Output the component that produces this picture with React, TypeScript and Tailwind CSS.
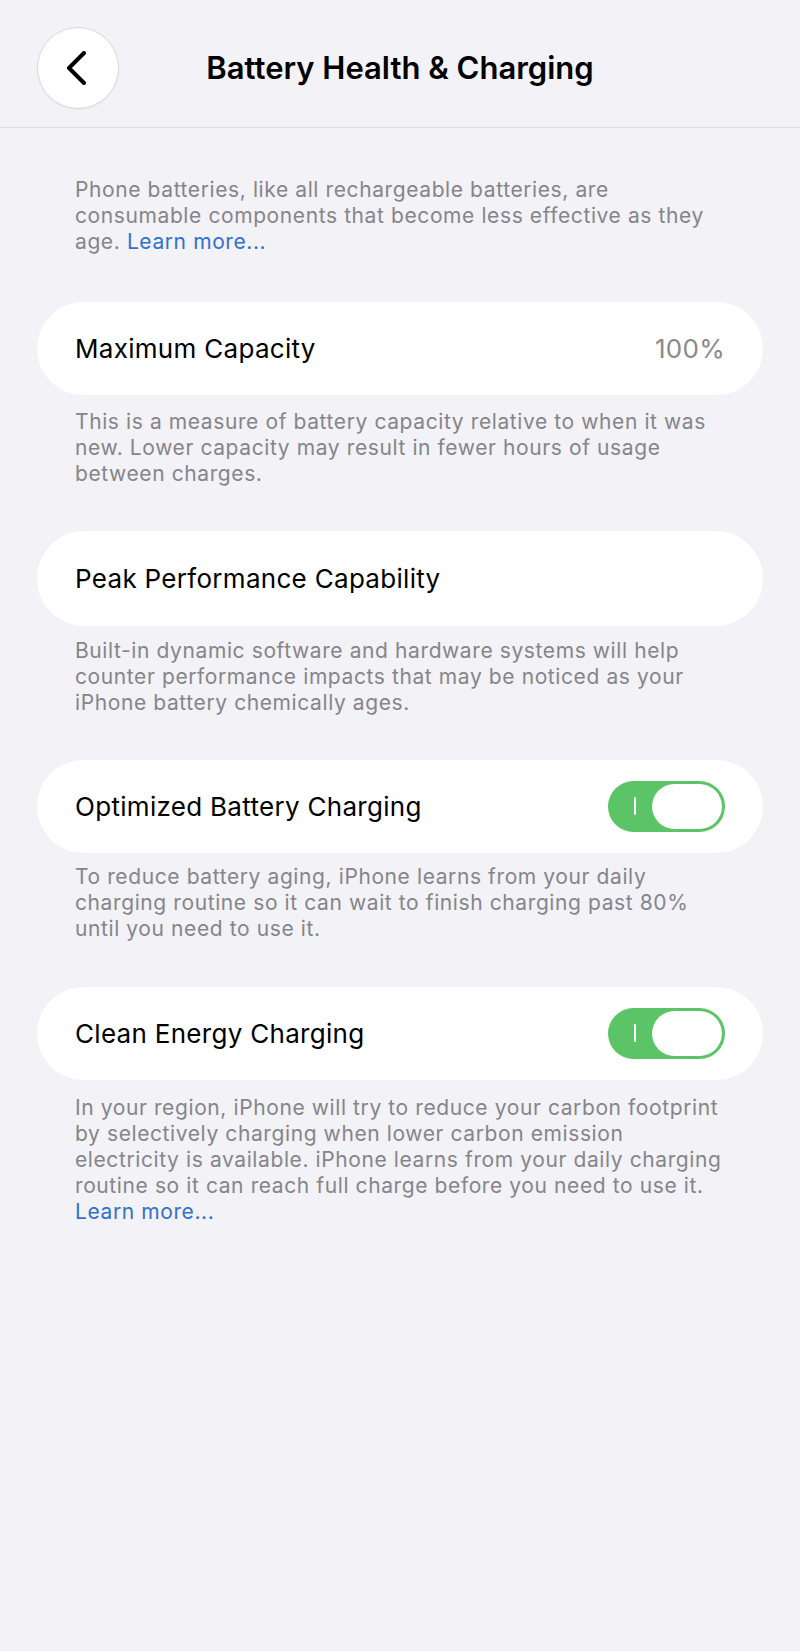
import { useState } from 'react';

const FONT = 'font-["Inter","Noto_Sans",sans-serif]';

export default function App() {
  const [optimized, setOptimized] = useState(true);
  const [cleanEnergy, setCleanEnergy] = useState(true);

  return (
    <div className={`min-h-[1651px] bg-[#f2f2f7] ${FONT} antialiased`}>
      <header className="grid grid-cols-[1fr_auto_1fr] items-center border-b border-[#dedee3] px-[37px] pt-[27px] pb-[18px]">
        <button className="flex h-[82px] w-[82px] items-center justify-center rounded-full border border-[#d9d9de] bg-white shadow-[0_1px_2px_rgba(0,0,0,0.04)]">
          <svg width="22" height="34" viewBox="0 0 22 34" fill="none" className="-ml-[4px]">
            <path d="M19 2 L4 17 L19 32" stroke="#000" strokeWidth="4" strokeLinecap="round" strokeLinejoin="round" />
          </svg>
        </button>
        <h1 className="text-[31px] font-semibold leading-[36px] text-black">Battery Health &amp; Charging</h1>
        <div />
      </header>

      <main className="px-[37px] pt-[49px] pb-10">
        <Footer
          lines={[
            'Phone batteries, like all rechargeable batteries, are',
            'consumable components that become less effective as they',
          ]}
          tail={<>age. <Link>Learn more...</Link></>}
        />

        <div className="mt-[47px]">
          <Row title="Maximum Capacity">
            <span className="text-[26px] leading-[32px] tracking-[0.3px] text-[#8a8a8e]">100%</span>
          </Row>
          <Footer
            className="mt-[14px]"
            lines={[
              'This is a measure of battery capacity relative to when it was',
              'new. Lower capacity may result in fewer hours of usage',
              'between charges.',
            ]}
          />
        </div>

        <div className="mt-[44px]">
          <Row title="Peak Performance Capability" height="h-[95px]" />
          <Footer
            className="mt-3"
            lines={[
              'Built-in dynamic software and hardware systems will help',
              'counter performance impacts that may be noticed as your',
              'iPhone battery chemically ages.',
            ]}
          />
        </div>

        <div className="mt-[44px]">
          <Row title="Optimized Battery Charging">
            <Toggle on={optimized} onChange={setOptimized} />
          </Row>
          <Footer
            className="mt-[11px]"
            lines={[
              'To reduce battery aging, iPhone learns from your daily',
              'charging routine so it can wait to finish charging past 80%',
              'until you need to use it.',
            ]}
          />
        </div>

        <div className="mt-[45px]">
          <Row title="Clean Energy Charging">
            <Toggle on={cleanEnergy} onChange={setCleanEnergy} />
          </Row>
          <Footer
            className="mt-[15px]"
            lines={[
              'In your region, iPhone will try to reduce your carbon footprint',
              'by selectively charging when lower carbon emission',
              'electricity is available. iPhone learns from your daily charging',
              'routine so it can reach full charge before you need to use it.',
            ]}
            tail={<Link>Learn more...</Link>}
          />
        </div>
      </main>
    </div>
  );
}

function Row({ title, height = 'h-[93px]', children }: { title: string; height?: string; children?: React.ReactNode }) {
  return (
    <div className={`flex ${height} items-center justify-between rounded-full bg-white px-[38px]`}>
      <span className="text-[26px] leading-[32px] tracking-[0.3px] text-black">{title}</span>
      {children}
    </div>
  );
}

function Footer({ lines, tail, className = '' }: { lines: string[]; tail?: React.ReactNode; className?: string }) {
  return (
    <p className={`pl-[38px] pr-[10px] text-[21px] leading-[26px] tracking-[0.6px] text-[#85858a] ${className}`}>
      {lines.map((line) => (
        <span key={line} className="block">
          {line}
        </span>
      ))}
      {tail && <span className="block">{tail}</span>}
    </p>
  );
}

function Link({ children }: { children: React.ReactNode }) {
  return <a className="text-[#3370cc]">{children}</a>;
}

function Toggle({ on, onChange }: { on: boolean; onChange: (v: boolean) => void }) {
  return (
    <button
      onClick={() => onChange(!on)}
      className={`relative flex h-[51px] w-[117px] items-center rounded-full p-[3px] ${
        on ? 'justify-end bg-[#5ac466]' : 'justify-start bg-[#e5e5ea]'
      }`}
    >
      {on && <span className="absolute left-[26px] top-[16px] h-[18px] w-[2px] rounded-full bg-white" />}
      <span className="h-full w-[70px] rounded-full bg-white" />
    </button>
  );
}
